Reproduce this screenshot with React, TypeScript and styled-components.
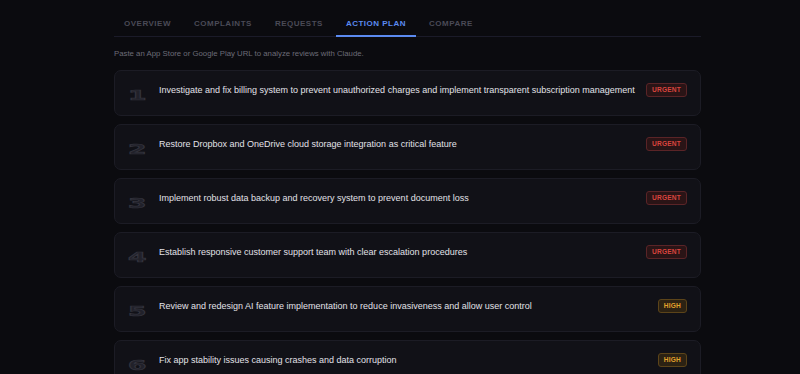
import React from "react";
import styled, { createGlobalStyle } from "styled-components";

const Global = createGlobalStyle`
  html, body { margin: 0; padding: 0; background: #0b0b0f; }
  body { font-family: "Liberation Sans", Arial, sans-serif; -webkit-font-smoothing: antialiased; }
`;

const Page = styled.div`
  width: 587px;
  margin: 0 auto 0 114px;
  display: flex;
  flex-direction: column;
`;

const TabBar = styled.div`
  display: flex;
  gap: 3px;
  border-bottom: 1px solid #1b1b29;
  height: 36px;
`;

const Tab = styled.div<{ $active?: boolean }>`
  padding: 18px 10px 0;
  font-size: 8px;
  font-weight: 700;
  letter-spacing: 0.5px;
  line-height: 12px;
  color: ${(p) => (p.$active ? "#5b8af0" : "#4a4a56")};
  border-bottom: 2px solid ${(p) => (p.$active ? "#5b8af0" : "transparent")};
  margin-bottom: -1px;
  box-sizing: border-box;
  height: 37px;
`;

const Hint = styled.div`
  font-size: 7.8px;
  color: #6c6c78;
  margin-top: 11px;
  line-height: 12px;
`;

const List = styled.div`
  display: flex;
  flex-direction: column;
  gap: 8px;
  margin-top: 10px;
`;

const Card = styled.div`
  display: flex;
  align-items: center;
  height: 46px;
  box-sizing: border-box;
  padding: 0 13px 6px 13px;
  background: #111117;
  border: 1px solid #1c1c25;
  border-radius: 7px;
`;

const NumCell = styled.div`
  width: 31px;
  flex: none;
  align-self: flex-start;
  padding-top: 15px;
`;

const Num = styled.span`
  display: inline-block;
  font-size: 14px;
  font-weight: 900;
  color: #21212a;
  -webkit-text-stroke: 0.7px #33333d;
  line-height: 14px;
  transform: scaleX(1.9);
  transform-origin: left center;
  font-family: "DejaVu Sans", sans-serif;
`;

const Title = styled.div`
  flex: 1;
  font-size: 9px;
  color: #e2e2e8;
  line-height: 13px;
`;

const Badge = styled.div<{ $level: "urgent" | "high" }>`
  flex: none;
  font-size: 6.6px;
  font-weight: 700;
  letter-spacing: 0.2px;
  padding: 0 5px;
  height: 14px;
  line-height: 12px;
  border-radius: 3px;
  box-sizing: border-box;
  color: ${(p) => (p.$level === "urgent" ? "#d9443e" : "#e2a12c")};
  background: ${(p) => (p.$level === "urgent" ? "#2a1416" : "#2c2213")};
  border: 1px solid ${(p) => (p.$level === "urgent" ? "#5a2427" : "#5c4419")};
`;

const tabs = ["OVERVIEW", "COMPLAINTS", "REQUESTS", "ACTION PLAN", "COMPARE"];

const items: { text: string; level: "urgent" | "high" }[] = [
  { text: "Investigate and fix billing system to prevent unauthorized charges and implement transparent subscription management", level: "urgent" },
  { text: "Restore Dropbox and OneDrive cloud storage integration as critical feature", level: "urgent" },
  { text: "Implement robust data backup and recovery system to prevent document loss", level: "urgent" },
  { text: "Establish responsive customer support team with clear escalation procedures", level: "urgent" },
  { text: "Review and redesign AI feature implementation to reduce invasiveness and allow user control", level: "high" },
  { text: "Fix app stability issues causing crashes and data corruption", level: "high" },
];

export default function App() {
  return (
    <>
      <Global />
      <Page>
        <TabBar>
          {tabs.map((t) => (
            <Tab key={t} $active={t === "ACTION PLAN"}>
              {t}
            </Tab>
          ))}
        </TabBar>
        <Hint>Paste an App Store or Google Play URL to analyze reviews with Claude.</Hint>
        <List>
          {items.map((it, i) => (
            <Card key={i}>
              <NumCell>
                <Num>{i + 1}</Num>
              </NumCell>
              <Title>{it.text}</Title>
              <Badge $level={it.level}>{it.level.toUpperCase()}</Badge>
            </Card>
          ))}
        </List>
      </Page>
    </>
  );
}
